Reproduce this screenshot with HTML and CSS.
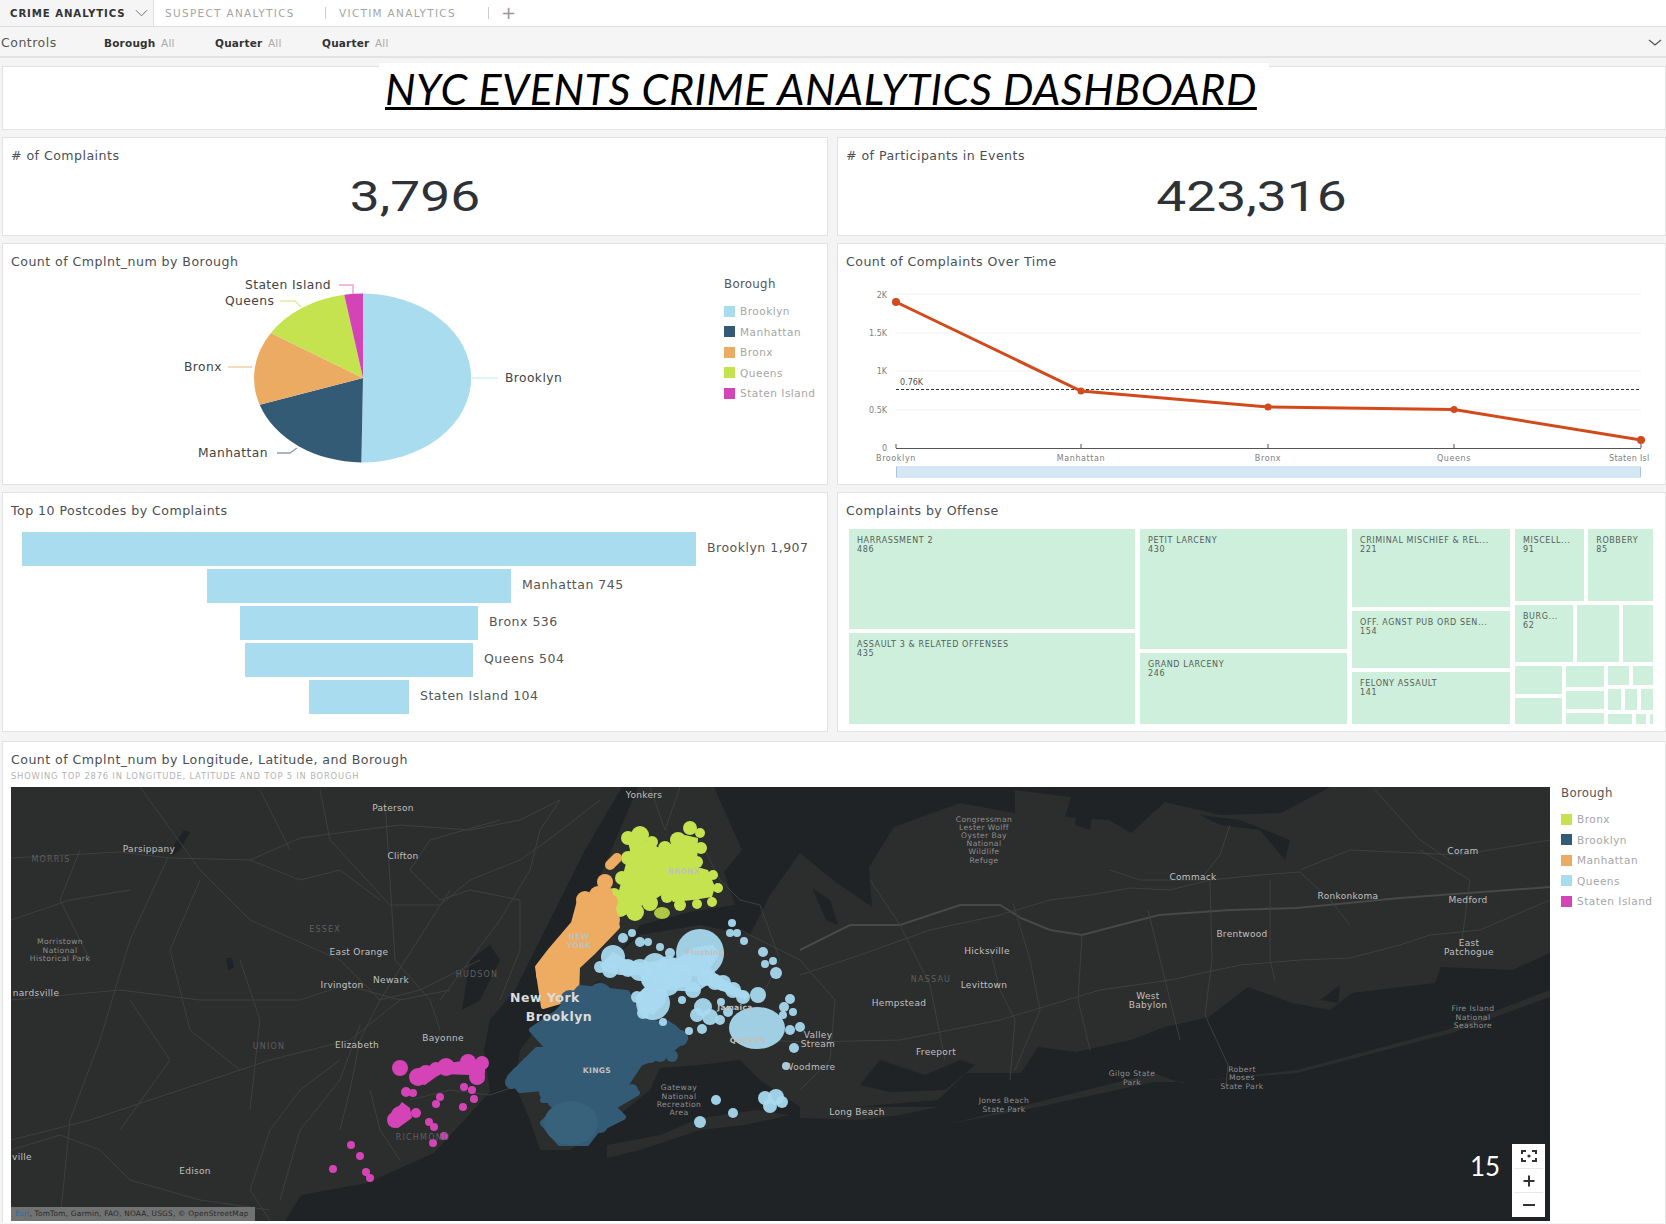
FILE: index.html
```html
<!DOCTYPE html>
<html lang="en">

<head>
    <meta charset="UTF-8">
    <meta name="viewport" content="width=device-width, initial-scale=1.0">
    <title>NYC Events Crime Analytics Dashboard</title>
    <link rel="stylesheet" href="styles.css">
</head>

<body>
    <div class="tabs">
        <div class="tab tab-active">
            <span>CRIME ANALYTICS</span>
            <svg class="tab-chevron" viewBox="0 0 14 8"><path d="M1 1l6 6 6-6" /></svg>
        </div>
        <div class="tab tab-suspect">SUSPECT ANALYTICS</div>
        <div class="tab tab-victim">VICTIM ANALYTICS</div>
        <div class="tab-plus">+</div>
    </div>

    <div class="controls">
        <span class="controls-label">Controls</span>
        <span class="control"><b>Borough</b> All</span>
        <span class="control"><b>Quarter</b> All</span>
        <span class="control"><b>Quarter</b> All</span>
        <svg class="controls-chevron" viewBox="0 0 14 8"><path d="M1 1l6 5 6-5" /></svg>
    </div>

    <div class="sheet">
        <div class="card title-card">
            <h1>NYC EVENTS CRIME ANALYTICS DASHBOARD</h1>
        </div>

        <div class="card kpi">
            <div class="card-title"># of Complaints</div>
            <div class="kpi-value">3,796</div>
        </div>
        <div class="card kpi">
            <div class="card-title"># of Participants in Events</div>
            <div class="kpi-value">423,316</div>
        </div>

        <div class="card">
            <div class="card-title">Count of Cmplnt_num by Borough</div>
            <div class="pie-body">
                <svg class="pie" width="660" height="205" viewBox="11 270 660 205">
                    <g transform="translate(363 377) scale(109 84.5)">
                        <path fill="#aadcf0" d="M0 0V-1A1 1 0 0 1 -.015 1Z" />
                        <path fill="#345b75" d="M0 0L-.015 1A1 1 0 0 1 -.948 .317Z" />
                        <path fill="#ecab62" d="M0 0L-.948 .317A1 1 0 0 1 -.845 -.534Z" />
                        <path fill="#c4e34f" d="M0 0L-.845 -.534A1 1 0 0 1 -.172 -.985Z" />
                        <path fill="#d444b6" d="M0 0L-.172 -.985A1 1 0 0 1 0 -1Z" />
                    </g>
                    <path class="leader" stroke="#e9a5dc" d="M339 284H353V293" />
                    <path class="leader" stroke="#dcef9d" d="M280 300H295L301 306" />
                    <path class="leader" stroke="#f3cfa5" d="M228 366H252" />
                    <path class="leader" stroke="#8ba2b2" d="M277 452H290L297 447" />
                    <path class="leader" stroke="#d8eef8" d="M472 377H498" />
                    <text class="pie-label" x="245" y="284">Staten Island</text>
                    <text class="pie-label" x="225" y="300">Queens</text>
                    <text class="pie-label" x="184" y="366">Bronx</text>
                    <text class="pie-label" x="198" y="452">Manhattan</text>
                    <text class="pie-label" x="505" y="377">Brooklyn</text>
                </svg>
                <div class="legend legend-pie">
                    <div class="legend-title">Borough</div>
                    <div class="legend-item"><i class="c-brooklyn"></i>Brooklyn</div>
                    <div class="legend-item"><i class="c-manhattan"></i>Manhattan</div>
                    <div class="legend-item"><i class="c-bronx"></i>Bronx</div>
                    <div class="legend-item"><i class="c-queens"></i>Queens</div>
                    <div class="legend-item"><i class="c-staten"></i>Staten Island</div>
                </div>
            </div>
        </div>

        <div class="card">
            <div class="card-title">Count of Complaints Over Time</div>
            <svg class="line-chart" width="811" height="212" viewBox="846 270 811 212">
                <path class="grid-line" d="M896 293H1641M896 332H1641M896 370H1641M896 409H1641" />
                <text class="axis-y" x="887" y="294">2K</text>
                <text class="axis-y" x="887" y="332">1.5K</text>
                <text class="axis-y" x="887" y="370">1K</text>
                <text class="axis-y" x="887" y="409">0.5K</text>
                <text class="axis-y" x="887" y="447">0</text>
                <path class="axis-line" d="M896 447.5H1641M896 443V447M1081 443V447M1268 443V447M1454 443V447M1641 443V447" />
                <path class="ref-line" d="M896 388.5H1641" />
                <text class="ref-label" x="900" y="381">0.76K</text>
                <path class="trend" d="M896 301L1081 390L1268 406L1454 408.500L1641 439" />
                <g class="trend-dots">
                    <circle cx="896" cy="301" r="4" />
                    <circle cx="1081" cy="390" r="3.5" />
                    <circle cx="1268" cy="406" r="3.500" />
                    <circle cx="1454" cy="408.500" r="3.500" />
                    <circle cx="1641" cy="439" r="4" />
                </g>
                <text class="axis-x" x="896" y="457">Brooklyn</text>
                <text class="axis-x" x="1081" y="457">Manhattan</text>
                <text class="axis-x" x="1268" y="457">Bronx</text>
                <text class="axis-x" x="1454" y="457">Queens</text>
                <text class="axis-x axis-x-last" x="1609" y="457">Staten Isl</text>
                <rect x="896" y="465" width="745" height="12" fill="#d5e7f4" />
                <path d="M896.500 466V476M1640.500 466V476" stroke="#a9c4d8" />
            </svg>
        </div>

        <div class="card">
            <div class="card-title">Top 10 Postcodes by Complaints</div>
            <div class="funnel">
                <div class="funnel-row"><div class="funnel-bar" style="width:674px"></div><span>Brooklyn 1,907</span></div>
                <div class="funnel-row"><div class="funnel-bar" style="width:304px"></div><span>Manhattan 745</span></div>
                <div class="funnel-row"><div class="funnel-bar" style="width:238px"></div><span>Bronx 536</span></div>
                <div class="funnel-row"><div class="funnel-bar" style="width:228px"></div><span>Queens 504</span></div>
                <div class="funnel-row"><div class="funnel-bar" style="width:100px"></div><span>Staten Island 104</span></div>
            </div>
        </div>

        <div class="card">
            <div class="card-title">Complaints by Offense</div>
            <div class="treemap">
                <div class="tree-col tree-col-1">
                    <div class="tile" style="flex:486">HARRASSMENT 2<br>486</div>
                    <div class="tile" style="flex:435">ASSAULT 3 &amp; RELATED OFFENSES<br>435</div>
                </div>
                <div class="tree-col tree-col-2">
                    <div class="tile" style="flex:430">PETIT LARCENY<br>430</div>
                    <div class="tile" style="flex:246">GRAND LARCENY<br>246</div>
                </div>
                <div class="tree-col tree-col-3">
                    <div class="tile" style="flex:221">CRIMINAL MISCHIEF &amp; REL...<br>221</div>
                    <div class="tile" style="flex:154">OFF. AGNST PUB ORD SEN...<br>154</div>
                    <div class="tile" style="flex:141">FELONY ASSAULT<br>141</div>
                </div>
                <div class="tree-col tree-col-4">
                    <div class="tree-row tree-row-a">
                        <div class="tile tile-tight" style="flex:69">MISCELL...<br>91</div>
                        <div class="tile tile-tight" style="flex:64">ROBBERY<br>85</div>
                    </div>
                    <div class="tree-row tree-row-b">
                        <div class="tile tile-tight" style="flex:50">BURG...<br>62</div>
                        <div class="tile" style="flex:42"></div>
                        <div class="tile" style="flex:30"></div>
                    </div>
                    <div class="tree-row tree-row-c">
                        <div class="tree-stack" style="flex:47">
                            <div class="tile" style="flex:28"></div>
                            <div class="tile" style="flex:26"></div>
                        </div>
                        <div class="tree-stack" style="flex:37">
                            <div class="tile" style="flex:21"></div>
                            <div class="tile" style="flex:19"></div>
                            <div class="tile" style="flex:11"></div>
                        </div>
                        <div class="tree-stack" style="flex:45">
                            <div class="tree-row" style="flex:21">
                                <div class="tile" style="flex:22"></div>
                                <div class="tile" style="flex:20"></div>
                            </div>
                            <div class="tree-row" style="flex:22">
                                <div class="tile" style="flex:14"></div>
                                <div class="tile" style="flex:12"></div>
                                <div class="tile" style="flex:12"></div>
                            </div>
                            <div class="tree-row" style="flex:11">
                                <div class="tile" style="flex:22"></div>
                                <div class="tile" style="flex:9"></div>
                                <div class="tile" style="flex:3"></div>
                            </div>
                        </div>
                    </div>
                </div>
            </div>
        </div>

        <div class="card map-card">
            <div class="card-title">Count of Cmplnt_num by Longitude, Latitude, and Borough</div>
            <div class="card-sub">SHOWING TOP 2876 IN LONGITUDE, LATITUDE AND TOP 5 IN BOROUGH</div>
            <div class="map-body">
                <div class="map">
                    <svg width="1539" height="434" viewBox="11 787 1539 434">
                        <rect x="11" y="787" width="1539" height="434" fill="#1f2326" />
                        <!-- land -->
                        <g fill="#2c2d2d">
                            <path d="M11 787H622L585 850L545 930L515 990L490 1020L484 1050L490 1092L434 1153L367 1183L301 1195L285 1221H11Z" />
                            <path d="M638 787H714L742 850L724 872L735 905L690 912L640 925L600 980L570 1000L560 970L590 900Z" />
                            <path d="M590 1000L610 960L640 935L700 925L750 935L770 895L800 853L833 880L872 907L869 867L894 827L960 803L1015 813V790L1071 797L1065 817L1109 820L1131 833L1165 802L1220 815L1281 813L1330 787H1550V953L1513 970L1441 967L1435 983L1352 993L1330 1010L1292 1003L1248 987L1209 1017L1165 1027L1131 1040L1076 1052L1038 1047L1021 1073L966 1073L938 1100L855 1107H800L760 1080L740 1060L700 1065L660 1068L650 1090L625 1110L600 1130L570 1150L540 1150L530 1120L515 1085L520 1050L535 1030L560 1010Z" />
                            <path d="M607 1145L660 1135L700 1118L757 1110L790 1115L745 1125L700 1130L640 1150L607 1158Z" />
                            <path d="M800 1107H938L900 1115L860 1120L800 1118Z" />
                            <path d="M944 1125L1038 1102L1154 1073L1181 1083L1297 1070L1446 1030L1550 990V997L1452 1033L1297 1073L1187 1082L1154 1082L1038 1107Z" />
                            <path d="M520 1095L560 1105L580 1095L600 1100L590 1130L560 1135Z" />
                        </g>
                        <!-- inlets -->
                        <g fill="#1f2326">
                            <path d="M174 845L184 830L190 832L180 850L172 856Z" />
                            <path d="M226 958L232 958L234 968L228 970Z" />
                            <path d="M470 960L490 945L500 960L480 1000L462 1010Z" />
                            <path d="M812 888L830 900L838 925L826 920Z" />
                            <path d="M1080 790L1095 795L1090 830L1075 825Z" />
                            <path d="M1200 815L1240 820L1290 840L1285 860L1260 830L1220 825Z" />
                            <path d="M880 1060L925 1075L960 1060L975 1065L945 1090L890 1092L860 1085Z" />
                            <path d="M1320 1000L1340 985L1338 1003Z" />
                        </g>
                        <!-- roads -->
                        <g class="roads">
                            <path d="M11 858L120 852L170 858L250 860L300 838L400 825L470 830L520 820L560 800" />
                            <path d="M168 857L130 940L100 1040L70 1120L60 1221" />
                            <path d="M320 790L330 840L390 905L440 905L470 880L520 860L555 835L600 800" />
                            <path d="M385 800L390 880L395 960L430 1000L440 1030" />
                            <path d="M140 787L200 870L250 920L340 960L380 1000L420 990L480 960" />
                            <path d="M11 1000L120 990L200 1000L300 1000L345 985L400 1000L450 990" />
                            <path d="M11 1140L90 1120L180 1090L270 1060L350 1040L400 1000" />
                            <path d="M340 1060L300 1090L270 1130L250 1190L270 1221" />
                            <path d="M360 1025L340 1080L300 1130L280 1200" />
                            <path d="M11 1150L60 1135L100 1150L130 1180L200 1200L270 1210" />
                            <path d="M500 820L430 840L410 870L440 900L470 890L520 900L520 950L500 1000" />
                            <path d="M450 890L380 1000L360 1040L350 1090L340 1130" />
                            <path d="M560 800L540 830L530 870L500 920L470 960L440 1000" />
                            <path d="M410 1100L450 1090L490 1095L520 1085" />
                            <path d="M370 1090L380 1130L400 1160" />
                            <path d="M250 860L300 880L340 870L380 900M260 790L290 850M80 850L60 900L90 960M200 880L170 950L190 1030L240 1070" />
                            <path d="M11 920L70 900L130 890M240 960L260 1020L250 1110M130 1000L170 1060L120 1130" />
                            <path d="M650 787L665 830L680 787M700 840L720 880L740 900L760 905L780 960L760 1000" />
                            <path d="M740 930L800 960L835 1000L830 1060L800 1090" />
                            <path d="M755 1040L810 1042L900 1040L1000 1020L1050 1005L1100 990L1170 980L1240 965L1300 960L1350 958L1400 945L1430 935L1480 930L1550 900" />
                            <path class="road-main" d="M800 950L850 925L900 925L960 905L1000 905L1021 918L1050 930L1082 935L1120 925L1159 915L1230 910L1297 908L1400 898L1550 887" />
                            <path d="M800 975L860 955L930 930L1000 915L1050 900L1090 895L1130 888L1170 890L1210 880L1260 875L1300 872" />
                            <path d="M1013 903L1030 960L1040 1010L1015 1070" />
                            <path d="M990 950L1000 990L1015 1020L1010 1080" />
                            <path d="M1082 935L1078 1000L1090 1050" />
                            <path d="M1148 910L1170 1000L1180 1040" />
                            <path d="M1210 880L1212 960L1205 1015L1228 1065L1226 1085" />
                            <path d="M1270 880L1270 960L1275 980M1300 872L1330 900L1350 925" />
                            <path d="M870 880L900 925L930 985L945 1060" />
                            <path d="M1420 850L1470 880L1462 940M1550 840L1460 855L1350 850L1300 870" />
                            <path d="M1110 870L1140 880L1200 880L1220 855L1230 825" />
                            <path d="M1375 790L1420 840L1450 860" />
                        </g>
                        <!-- complaint clusters -->
                        <g fill="#c4e34f">
                            <path d="M628 842L650 842L662 850L685 835L698 838L697 867L708 870L715 887L712 897L693 900L673 902L667 892L650 902L627 912L616 902L625 867L630 850Z" />
                            <circle cx="628" cy="838" r="7" /><circle cx="640" cy="835" r="9" /><circle cx="652" cy="842" r="6" /><circle cx="665" cy="848" r="7" /><circle cx="678" cy="840" r="8" /><circle cx="690" cy="828" r="7" /><circle cx="700" cy="833" r="5" /><circle cx="701" cy="848" r="6" /><circle cx="697" cy="862" r="6" /><circle cx="713" cy="875" r="5" /><circle cx="718" cy="888" r="5" /><circle cx="712" cy="902" r="5" /><circle cx="697" cy="904" r="5" /><circle cx="680" cy="905" r="6" /><circle cx="667" cy="897" r="6" /><circle cx="650" cy="903" r="8" /><circle cx="635" cy="912" r="9" /><circle cx="620" cy="908" r="9" /><circle cx="614" cy="895" r="7" /><circle cx="622" cy="878" r="7" /><circle cx="628" cy="858" r="7" />
                            <ellipse cx="662" cy="913" rx="8" ry="6" fill="#aec745" />
                        </g>
                        <g fill="#eeab62" stroke="#eeab62" stroke-width="4" stroke-linejoin="round">
                            <path d="M580 897L610 890L618 927L593 953L578 967L577 997L543 1007L537 967L550 950L573 923Z" />
                            <path d="M617 858L610 865" stroke-width="10" stroke-linecap="round" />
                            <g stroke="none">
                                <circle cx="605" cy="882" r="8" /><circle cx="585" cy="900" r="9" /><circle cx="598" cy="895" r="9" /><circle cx="610" cy="902" r="8" /><circle cx="612" cy="920" r="8" /><circle cx="592" cy="945" r="8" /><circle cx="575" cy="962" r="7" /><circle cx="555" cy="955" r="8" /><circle cx="543" cy="975" r="7" /><circle cx="546" cy="995" r="7" /><circle cx="568" cy="998" r="6" />
                            </g>
                        </g>
                        <g fill="#345b75">
                            <path stroke="#345b75" stroke-width="6" stroke-linejoin="round" d="M580 988L627 993L640 1020L673 1027L685 1038L667 1053L640 1063L620 1093L637 1093L613 1107L623 1117L597 1130L587 1143L560 1143L543 1123L567 1100L543 1100L557 1087L520 1090L510 1077L537 1050L550 1050L532 1030L557 1013Z" />
                            <circle cx="520" cy="1075" r="9" /><circle cx="512" cy="1082" r="7" /><circle cx="530" cy="1065" r="9" /><circle cx="555" cy="1040" r="12" /><circle cx="545" cy="1035" r="8" /><circle cx="570" cy="1000" r="10" /><circle cx="600" cy="995" r="12" /><circle cx="625" cy="1002" r="10" /><circle cx="645" cy="1025" r="10" /><circle cx="665" cy="1030" r="10" /><circle cx="680" cy="1038" r="8" /><circle cx="650" cy="1055" r="8" /><circle cx="660" cy="1055" r="7" /><circle cx="672" cy="1056" r="6" /><circle cx="625" cy="1075" r="7" /><circle cx="632" cy="1090" r="6" /><circle cx="617" cy="1100" r="6" /><circle cx="600" cy="1125" r="8" /><circle cx="612" cy="1112" r="7" /><circle cx="555" cy="1100" r="8" /><circle cx="545" cy="1093" r="6" /><circle cx="565" cy="1090" r="9" /><circle cx="590" cy="1090" r="12" /><circle cx="580" cy="1110" r="12" />
                            <ellipse cx="571" cy="1123" rx="27" ry="22" fill="#38617c" />
                        </g>
                        <g fill="#a8daf0" fill-opacity=".94">
                            <path d="M600 965L613 952L627 960L643 963L680 957L693 948L713 945L720 953L710 968L720 977L750 995L745 1000L707 985L697 992L667 990L665 1003L653 1015L640 1010L635 997L645 987L640 975L620 975L605 972Z" />
                            <circle cx="700" cy="953" r="24" /><ellipse cx="757" cy="1028" rx="28" ry="21" /><circle cx="653" cy="1003" r="17" />
                            <circle cx="613" cy="957" r="12" /><circle cx="600" cy="967" r="6" /><circle cx="610" cy="970" r="8" /><circle cx="623" cy="938" r="5" /><circle cx="632" cy="933" r="4" /><circle cx="640" cy="942" r="5" /><circle cx="648" cy="942" r="4" /><circle cx="660" cy="947" r="4" /><circle cx="670" cy="953" r="5" /><circle cx="628" cy="968" r="9" /><circle cx="640" cy="970" r="11" /><circle cx="655" cy="965" r="12" /><circle cx="668" cy="968" r="12" /><circle cx="680" cy="976" r="12" /><circle cx="667" cy="983" r="13" /><circle cx="650" cy="980" r="9" /><circle cx="693" cy="990" r="8" /><circle cx="705" cy="978" r="8" /><circle cx="715" cy="982" r="8" /><circle cx="723" cy="983" r="8" /><circle cx="733" cy="990" r="8" /><circle cx="743" cy="997" r="7" /><circle cx="758" cy="995" r="8" /><circle cx="637" cy="997" r="6" /><circle cx="643" cy="1013" r="6" /><circle cx="663" cy="1022" r="4" /><circle cx="682" cy="1000" r="4" /><circle cx="703" cy="1007" r="9" /><circle cx="710" cy="1017" r="8" /><circle cx="697" cy="1015" r="7" /><circle cx="720" cy="1020" r="5" /><circle cx="728" cy="1012" r="5" /><circle cx="721" cy="1002" r="4" /><circle cx="689" cy="1031" r="4" /><circle cx="702" cy="1029" r="5" /><circle cx="790" cy="999" r="5" /><circle cx="784" cy="1007" r="5" /><circle cx="793" cy="1012" r="4" /><circle cx="783" cy="1015" r="4" /><circle cx="790" cy="1030" r="5" /><circle cx="800" cy="1027" r="5" /><circle cx="794" cy="1048" r="5" /><circle cx="786" cy="1066" r="4" /><circle cx="732" cy="923" r="4" /><circle cx="730" cy="933" r="4" /><circle cx="737" cy="933" r="4" /><circle cx="744" cy="941" r="4" /><circle cx="763" cy="952" r="5" /><circle cx="773" cy="961" r="4" /><circle cx="765" cy="964" r="4" /><circle cx="776" cy="973" r="6" /><circle cx="716" cy="1100" r="5" /><circle cx="733" cy="1113" r="5" /><circle cx="700" cy="1122" r="6" />
                            <circle cx="765" cy="1098" r="7" /><circle cx="776" cy="1097" r="8" /><circle cx="782" cy="1102" r="6" /><circle cx="770" cy="1106" r="7" />
                        </g>
                        <g fill="#d444b6">
                            <path d="M402 1102L410 1108L412 1118L398 1128L388 1124L394 1112Z" />
                            <path d="M412 1072L440 1064L470 1060L486 1060L484 1082L470 1075L440 1074L425 1085L410 1082Z" />
                            <circle cx="400" cy="1068" r="8" /><circle cx="418" cy="1077" r="9" /><circle cx="426" cy="1073" r="8" /><circle cx="446" cy="1067" r="9" /><circle cx="436" cy="1069" r="7" /><circle cx="468" cy="1062" r="8" /><circle cx="482" cy="1063" r="7" /><circle cx="477" cy="1077" r="8" /><circle cx="406" cy="1092" r="5" /><circle cx="413" cy="1093" r="4" /><circle cx="464" cy="1087" r="4" /><circle cx="472" cy="1090" r="4" /><circle cx="440" cy="1097" r="4" /><circle cx="474" cy="1099" r="4" /><circle cx="436" cy="1104" r="4" /><circle cx="463" cy="1107" r="4" /><circle cx="400" cy="1115" r="9" /><circle cx="395" cy="1120" r="8" /><circle cx="416" cy="1113" r="5" /><circle cx="429" cy="1122" r="4" /><circle cx="434" cy="1127" r="4" /><circle cx="444" cy="1136" r="4" /><circle cx="433" cy="1143" r="4" /><circle cx="351" cy="1145" r="4" /><circle cx="360" cy="1156" r="4" /><circle cx="333" cy="1169" r="4" /><circle cx="366" cy="1172" r="4" /><circle cx="370" cy="1178" r="4" />
                        </g>
                        <!-- place names -->
                        <g class="places">
                            <text x="644" y="795">Yonkers</text><text x="393" y="808">Paterson</text><text x="149" y="849">Parsippany</text><text x="403" y="856">Clifton</text><text x="359" y="952">East Orange</text><text x="391" y="980">Newark</text><text x="342" y="985">Irvington</text><text x="36" y="993">nardsville</text><text x="357" y="1045">Elizabeth</text><text x="443" y="1038">Bayonne</text><text x="195" y="1171">Edison</text><text x="22" y="1157">ville</text>
                            <text x="810" y="1067">Woodmere</text><text x="857" y="1112">Long Beach</text><text x="818" y="1035">Valley</text><text x="818" y="1044">Stream</text><text x="936" y="1052">Freeport</text><text x="899" y="1003">Hempstead</text><text x="984" y="985">Levittown</text><text x="987" y="951">Hicksville</text><text x="1193" y="877">Commack</text><text x="1463" y="851">Coram</text><text x="1348" y="896">Ronkonkoma</text><text x="1468" y="900">Medford</text><text x="1242" y="934">Brentwood</text><text x="1469" y="943">East</text><text x="1469" y="952">Patchogue</text><text x="1148" y="996">West</text><text x="1148" y="1005">Babylon</text>
                        </g>
                        <g class="places places-small">
                            <text x="60" y="941">Morristown</text><text x="60" y="950">National</text><text x="60" y="958">Historical Park</text>
                            <text x="679" y="1087">Gateway</text><text x="679" y="1096">National</text><text x="679" y="1104">Recreation</text><text x="679" y="1112">Area</text>
                            <text x="984" y="819">Congressman</text><text x="984" y="827">Lester Wolff</text><text x="984" y="835">Oyster Bay</text><text x="984" y="843">National</text><text x="984" y="851">Wildlife</text><text x="984" y="860">Refuge</text>
                            <text x="1473" y="1008">Fire Island</text><text x="1473" y="1017">National</text><text x="1473" y="1025">Seashore</text>
                            <text x="1132" y="1073">Gilgo State</text><text x="1132" y="1082">Park</text>
                            <text x="1242" y="1069">Robert</text><text x="1242" y="1077">Moses</text><text x="1242" y="1086">State Park</text>
                            <text x="1004" y="1100">Jones Beach</text><text x="1004" y="1109">State Park</text>
                        </g>
                        <g class="places places-area">
                            <text x="51" y="859">MORRIS</text><text x="325" y="929">ESSEX</text><text x="477" y="974">HUDSON</text><text x="269" y="1046">UNION</text><text x="423" y="1137">RICHMOND</text><text x="931" y="979">NASSAU</text>
                        </g>
                        <g class="places places-over">
                            <text x="684" y="871" fill="#6f8238">BRONX</text><text x="579" y="936" fill="#7d5c33">NEW</text><text x="579" y="945" fill="#7d5c33">YORK</text><text x="597" y="1070" fill="#7d93a2">KINGS</text><text x="705" y="952" fill="#76909d">Flushing</text><text x="735" y="1007" fill="#76909d">Jamaica</text><text x="748" y="1040" fill="#76909d">QUEENS</text>
                        </g>
                        <g class="places places-big">
                            <text x="545" y="997">New York</text><text x="559" y="1016">Brooklyn</text>
                        </g>
                    </svg>
                    <div class="attribution"><span>Esri</span>, TomTom, Garmin, FAO, NOAA, USGS, © OpenStreetMap</div>
                    <div class="page-number">15</div>
                    <div class="zoom-box">
                        <div class="zoom-btn">
                            <svg width="16" height="12" viewBox="0 0 16 12"><path d="M1 4V1H5M11 1H15V4M15 8V11H11M5 11H1V8" /><circle cx="8" cy="6" r="1.600" /></svg>
                        </div>
                        <div class="zoom-btn">
                            <svg width="14" height="14" viewBox="0 0 14 14"><path d="M7 1.500V12.500M1.500 7H12.500" /></svg>
                        </div>
                        <div class="zoom-btn">
                            <svg width="14" height="14" viewBox="0 0 14 14"><path d="M1 7H13" /></svg>
                        </div>
                    </div>
                </div>
                <div class="legend legend-map">
                    <div class="legend-title">Borough</div>
                    <div class="legend-item"><i class="c-queens"></i>Bronx</div>
                    <div class="legend-item"><i class="c-manhattan"></i>Brooklyn</div>
                    <div class="legend-item"><i class="c-bronx"></i>Manhattan</div>
                    <div class="legend-item"><i class="c-brooklyn"></i>Queens</div>
                    <div class="legend-item"><i class="c-staten"></i>Staten Island</div>
                </div>
            </div>
        </div>
    </div>
</body>
</html>
```

FILE: styles.css
```css
html, body {
    margin: 0;
    height: 1224px;
    overflow: hidden;
}

body {
    background-color: #f4f4f4;
    font-family: "DejaVu Sans", sans-serif;
    color: #444;
}

/* tab strip */
.tabs {
    display: flex;
    align-items: center;
    height: 26px;
    background-color: #fff;
    border-bottom: 1px solid #ddd;
    font-size: 10.500px;
}

.tab {
    color: #a5a5a5;
    letter-spacing: 1.300px;
    white-space: nowrap;
}

.tab-active {
    display: flex;
    align-items: center;
    align-self: stretch;
    box-sizing: border-box;
    width: 154px;
    padding-left: 10px;
    background-color: #f5f5f5;
    border-right: 1px solid #ddd;
    color: #333;
    font-weight: bold;
    font-size: 10.200px;
    letter-spacing: .9px;
}

.tab-chevron {
    flex: none;
    width: 13px;
    height: 8px;
    margin-left: 9px;
    fill: none;
    stroke: #666;
}

.tab-suspect {
    width: 160px;
    margin-left: 11px;
    border-right: 1px solid #ccc;
}

.tab-victim {
    width: 149px;
    padding-left: 13px;
    border-right: 1px solid #ccc;
}

.tab-plus {
    margin-left: 12px;
    color: #999;
    font-size: 18px;
    line-height: 20px;
}

/* controls strip */
.controls {
    display: flex;
    align-items: center;
    box-sizing: border-box;
    height: 31px;
    padding: 2px 0 0 1px;
    background-color: #f5f5f5;
    border-bottom: 2px solid #e3e3e3;
    font-size: 11px;
    color: #aaa;
}

.controls-label {
    width: 103px;
    color: #555;
    font-size: 12.500px;
    letter-spacing: .5px;
}

.control {
    width: 107px;
    font-size: 10.500px;
    letter-spacing: .2px;
}

.controls-label + .control {
    width: 111px;
}

.control b {
    color: #333;
    margin-right: 2px;
    font-size: 10.500px;
}

.controls-chevron {
    width: 14px;
    height: 8px;
    margin-left: auto;
    margin-right: 4px;
    fill: none;
    stroke: #555;
    stroke-width: 1.3;
}

/* dashboard grid */
.sheet {
    display: grid;
    grid-template-columns: 826px 1fr;
    grid-template-rows: 64px 99px 242px 240px 484px;
    gap: 7px 9px;
    padding: 8px 0 0 2px;
}

.card {
    box-sizing: border-box;
    background-color: #fff;
    border: 1px solid #e2e2e2;
    padding: 9px 8px 0;
    min-width: 0;
    overflow: hidden;
}

.card-title {
    height: 18px;
    line-height: 18px;
    font-size: 12.600px;
    letter-spacing: .45px;
    color: #4b4f55;
    white-space: nowrap;
}

.title-card {
    grid-column: 1 / 3;
    padding: 0;
    overflow: visible;
}

h1 {
    display: block;
    box-sizing: border-box;
    width: 890px;
    height: 60px;
    margin: -4px 0 0 376px;
    padding-left: 6px;
    background-color: #fff;
    font-family: Lato, sans-serif;
    font-weight: 400;
    font-style: italic;
    font-size: 43px;
    line-height: 52px;
    letter-spacing: .55px;
    color: #000;
    text-decoration: underline;
    text-decoration-thickness: 3px;
    white-space: nowrap;
}

.kpi-value {
    margin-top: 10px;
    font-family: Roboto, sans-serif;
    font-weight: 400;
    font-size: 42px;
    line-height: 44px;
    text-align: center;
    color: #2e3136;
    transform: scaleX(1.27);
}

/* pie */
.pie-body {
    display: flex;
    height: 212px;
}

.pie {
    display: block;
    flex: none;
}

.leader {
    fill: none;
    stroke-width: 1.5;
}

.pie-label {
    font-size: 12.300px;
    letter-spacing: .4px;
    fill: #444;
    dominant-baseline: central;
}

.legend-title {
    height: 18px;
    line-height: 18px;
    font-size: 11.800px;
    letter-spacing: .3px;
    color: #555;
}

.legend-item {
    display: flex;
    align-items: center;
    height: 20.500px;
    font-size: 10.500px;
    letter-spacing: .5px;
    color: #a6a6a6;
    white-space: nowrap;
}

.legend-item i {
    width: 11px;
    height: 11px;
    margin-right: 5px;
}

.legend-pie {
    margin-left: 53px;
    padding-top: 4px;
}

.legend-pie .legend-title {
    margin-bottom: 8px;
}

.legend-map {
    margin-left: 11px;
    margin-top: -3px;
}

.legend-map .legend-title {
    margin-bottom: 7px;
}

.c-brooklyn { background-color: #aadcf0; }
.c-manhattan { background-color: #345b75; }
.c-bronx { background-color: #ecab62; }
.c-queens { background-color: #c4e34f; }
.c-staten { background-color: #d444b6; }

/* line chart */
.line-chart {
    display: block;
}

.grid-line {
    stroke: #f1f1f1;
    stroke-width: 1;
}

.axis-y, .axis-x, .ref-label {
    font-size: 8px;
    fill: #808080;
    dominant-baseline: central;
}

.axis-y {
    text-anchor: end;
}

.axis-x {
    text-anchor: middle;
    letter-spacing: .6px;
}

.axis-x-last {
    text-anchor: start;
    letter-spacing: .3px;
}

.ref-label {
    fill: #555;
}

.axis-line {
    stroke: #555;
    fill: none;
}

.ref-line {
    stroke: #333;
    stroke-dasharray: 3 2;
}

.trend {
    fill: none;
    stroke: #d2491c;
    stroke-width: 3;
}

.trend-dots {
    fill: #d2491c;
}

/* funnel */
.funnel {
    display: flex;
    flex-direction: column;
    gap: 3px;
    width: 696px;
    margin-top: 12px;
}

.funnel-row {
    display: grid;
    grid-template-columns: minmax(0, 1fr) auto minmax(0, 1fr);
    align-items: center;
    height: 34px;
    font-size: 12.500px;
    letter-spacing: .5px;
    color: #555;
}

.funnel-bar {
    grid-column: 2;
    height: 34px;
    background-color: #aadcf0;
}

.funnel-row span {
    grid-column: 3;
    margin: 0 0 3px 11px;
    white-space: nowrap;
}

/* treemap */
.treemap {
    display: flex;
    gap: 5px;
    height: 195px;
    margin: 9px 0 0 3px;
}

.tree-col,
.tree-stack {
    display: flex;
    flex-direction: column;
    gap: 4px;
    min-width: 0;
}

.tree-col-1 { width: 286px; }
.tree-col-2 { width: 207px; }
.tree-col-3 { width: 158px; }
.tree-col-4 { width: 138px; }

.tree-row {
    display: flex;
    gap: 4px;
    min-height: 0;
}

.tree-row-a { height: 72px; }
.tree-row-b { height: 57px; }
.tree-row-c { height: 58px; }

.tile {
    box-sizing: border-box;
    min-width: 0;
    min-height: 0;
    padding: 7px 8px 0;
    background-color: #ceefdb;
    font-size: 8px;
    line-height: 9px;
    letter-spacing: .6px;
    color: #55605b;
    overflow: hidden;
    white-space: nowrap;
}

.tile:empty {
    padding: 0;
}

.tile-tight {
    padding-right: 0;
}

/* map */
.map-card {
    grid-column: 1 / 3;
    margin-top: 2px;
    border-bottom: 0;
}

.card-sub {
    height: 10px;
    margin-top: 2px;
    font-size: 8.400px;
    line-height: 10px;
    letter-spacing: .8px;
    color: #b3b3b3;
    white-space: nowrap;
}

.map-body {
    display: flex;
    margin-top: 6px;
}

.map {
    position: relative;
    flex: none;
    width: 1539px;
    height: 434px;
}

.map svg {
    display: block;
}

.roads {
    fill: none;
    stroke: #3e3f3f;
    stroke-width: 1;
}

.road-main {
    stroke: #474848;
    stroke-width: 2;
}

.places text {
    font-size: 9px;
    letter-spacing: .3px;
    fill: #c0c0c0;
    text-anchor: middle;
    dominant-baseline: central;
}

.places-small text {
    font-size: 7.600px;
    letter-spacing: .4px;
    fill: #8f8f8f;
}

.places-area text {
    font-size: 8px;
    fill: #5e5f5f;
    letter-spacing: 1.200px;
}

.places-over text {
    font-weight: bold;
    font-size: 7.600px;
}

.places-big text {
    font-size: 12.500px;
    letter-spacing: .5px;
    font-weight: bold;
    fill: #dcdcdc;
}

.attribution {
    position: absolute;
    left: 0;
    bottom: 0;
    box-sizing: border-box;
    width: 244px;
    height: 14px;
    padding-left: 4px;
    background-color: #717272;
    font-size: 7.400px;
    letter-spacing: .2px;
    line-height: 14px;
    color: #2b2b2b;
    white-space: nowrap;
    overflow: hidden;
}

.attribution span {
    color: #2f6ea5;
}

.page-number {
    position: absolute;
    left: 1459px;
    top: 362px;
    font-family: Lato, sans-serif;
    font-size: 26px;
    line-height: 34px;
    color: #fff;
}

.zoom-box {
    position: absolute;
    right: 5px;
    bottom: 4px;
    display: flex;
    flex-direction: column;
    width: 33px;
    height: 73px;
    background-color: #fff;
}

.zoom-btn {
    flex: 1;
    display: flex;
    align-items: center;
    justify-content: center;
    margin: 0 2px;
    border-bottom: 1px solid #e8e8e8;
}

.zoom-btn:last-child {
    border-bottom: 0;
}

.map .zoom-btn path {
    fill: none;
    stroke: #333;
    stroke-width: 2;
}

.map .zoom-btn circle {
    fill: #333;
}
```
